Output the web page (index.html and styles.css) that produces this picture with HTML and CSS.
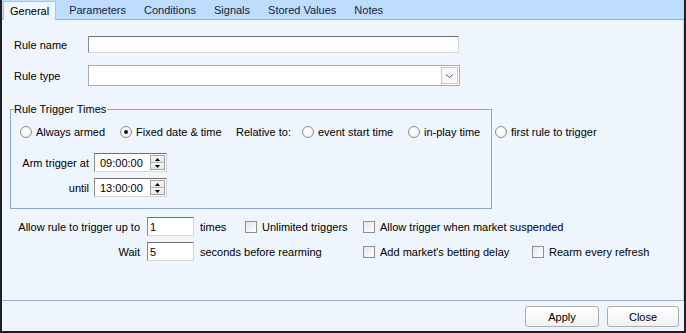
FILE: index.html
```html
<!DOCTYPE html>
<html lang="en">
<head>
    <meta charset="UTF-8">
    <title>Rule Editor</title>
    <link rel="stylesheet" href="styles.css">
</head>
<body>
    <div class="window">
        <div class="tabs">
            <span class="tab active">General</span>
            <span class="tab">Parameters</span>
            <span class="tab">Conditions</span>
            <span class="tab">Signals</span>
            <span class="tab">Stored Values</span>
            <span class="tab">Notes</span>
        </div>

        <div class="panel">
            <div class="row">
                <span class="field-label">Rule name</span>
                <input class="textbox name-box" type="text" value="">
            </div>
            <div class="row row-type">
                <span class="field-label">Rule type</span>
                <div class="combo">
                    <span class="drop">
                        <svg width="9" height="6" viewBox="0 0 9 6"><path d="M1 1.5 L4.5 4.5 L8 1.5" fill="none" stroke="#555" stroke-width="1"/></svg>
                    </span>
                </div>
            </div>

            <div class="group">
                <span class="legend">Rule Trigger Times</span>
                <div class="radio-row">
                    <span class="opt opt-always"><i class="radio"></i>Always armed</span>
                    <span class="opt opt-fixed"><i class="radio checked"></i>Fixed date &amp; time</span>
                    <span class="opt opt-relative">Relative to:</span>
                    <span class="opt opt-event"><i class="radio"></i>event start time</span>
                    <span class="opt opt-inplay"><i class="radio"></i>in-play time</span>
                    <span class="opt"><i class="radio"></i>first rule to trigger</span>
                </div>
                <div class="time-row">
                    <span class="time-label">Arm trigger at</span>
                    <div class="textbox timebox">
                        <span>09:00:00</span>
                        <span class="spin">
                            <i class="spin-up"><svg width="5" height="3" viewBox="0 0 5 3"><path d="M0 3 L2.5 0 L5 3 Z" fill="#000"/></svg></i>
                            <i class="spin-down"><svg width="5" height="3" viewBox="0 0 5 3"><path d="M0 0 L2.5 3 L5 0 Z" fill="#000"/></svg></i>
                        </span>
                    </div>
                </div>
                <div class="time-row until-row">
                    <span class="time-label">until</span>
                    <div class="textbox timebox">
                        <span>13:00:00</span>
                        <span class="spin">
                            <i class="spin-up"><svg width="5" height="3" viewBox="0 0 5 3"><path d="M0 3 L2.5 0 L5 3 Z" fill="#000"/></svg></i>
                            <i class="spin-down"><svg width="5" height="3" viewBox="0 0 5 3"><path d="M0 0 L2.5 3 L5 0 Z" fill="#000"/></svg></i>
                        </span>
                    </div>
                </div>
            </div>

            <div class="count-row first">
                <span class="count-label">Allow rule to trigger up to</span>
                <input class="textbox num-box" type="text" value="1">
                <span class="after short">times</span>
                <span class="check-item short"><i class="check"></i>Unlimited triggers</span>
                <span class="check-item"><i class="check"></i>Allow trigger when market suspended</span>
            </div>
            <div class="count-row">
                <span class="count-label">Wait</span>
                <input class="textbox num-box" type="text" value="5">
                <span class="after long">seconds before rearming</span>
                <span class="check-item long"><i class="check"></i>Add market's betting delay</span>
                <span class="check-item"><i class="check"></i>Rearm every refresh</span>
            </div>
        </div>

        <div class="footer">
            <button class="btn apply">Apply</button>
            <button class="btn close">Close</button>
        </div>
    </div>
</body>
</html>
```

FILE: styles.css
```css
body {
    margin: 0;
    font-family: "Liberation Sans", Arial, sans-serif;
    font-size: 11px;
    color: #000;
}
.window {
    width: 686px;
    height: 333px;
    box-sizing: border-box;
    border-left: 2px solid #1d1e26;
    border-right: 2px solid #1d1e26;
    border-bottom: 2px solid #1d1e26;
    background-color: #eef5fd;
    display: flex;
    flex-direction: column;
}
.tabs {
    height: 20px;
    box-sizing: border-box;
    background-color: #bedcfd;
    border-bottom: 1px solid #8eb0da;
    display: flex;
    align-items: flex-end;
    padding-left: 1px;
}
.tab {
    padding: 0 9px;
    height: 19px;
    line-height: 21px;
    box-sizing: border-box;
    color: #15233d;
}
.tab.active {
    background-color: #eef5fd;
    border: 1px solid #a7c3e6;
    border-bottom: none;
    height: 19px;
    line-height: 19px;
    margin-bottom: -1px;
    padding: 0 6px 0 6px;
    margin-right: 4px;
    color: #000;
}
.panel {
    height: 281px;
    box-sizing: border-box;
    border-bottom: 1px solid #96aed1;
    border-right: 1px solid #c2d2e7;
    padding: 16px 0 0 8px;
}
.row {
    display: flex;
    align-items: center;
    margin-left: 4px;
}
.row-type {
    margin-top: 12px;
}
.field-label {
    width: 74px;
}
.textbox {
    box-sizing: border-box;
    background-color: #fff;
    border-top: 1px solid #6f6f6f;
    border-left: 1px solid #8c8c8c;
    border-right: 1px solid #d6d6d6;
    border-bottom: 1px solid #d6d6d6;
    font-family: inherit;
    font-size: 11px;
    margin: 0;
    outline: none;
}
.name-box {
    width: 371px;
    height: 17px;
}
.combo {
    width: 372px;
    height: 21px;
    box-sizing: border-box;
    border: 1px solid #acacac;
    background-color: #fff;
    display: flex;
    align-items: center;
    justify-content: flex-end;
    padding-right: 1px;
}
.drop {
    width: 17px;
    height: 17px;
    box-sizing: border-box;
    border: 1px solid #c9c9c9;
    background-color: #f7f7f7;
    display: flex;
    align-items: center;
    justify-content: center;
}
.group {
    position: relative;
    margin-top: 23px;
    width: 482px;
    box-sizing: border-box;
    border: 1px solid #86a8d4;
    padding: 14px 0 11px 9px;
}
.legend {
    position: absolute;
    top: -8px;
    left: 3px;
    padding: 0 1px 0 0;
    background-color: #eef5fd;
    line-height: 14px;
}
.radio-row {
    display: flex;
    align-items: center;
    height: 14px;
    margin-top: 1px;
}
.opt {
    display: flex;
    align-items: center;
    flex-shrink: 0;
    white-space: nowrap;
}
.opt-always { width: 100px; }
.opt-fixed { width: 116px; }
.opt-relative { width: 66px; }
.opt-event { width: 106px; }
.opt-inplay { width: 87px; }
.radio {
    width: 12px;
    height: 12px;
    box-sizing: border-box;
    border: 1px solid #8f8f8f;
    border-radius: 50%;
    background: radial-gradient(circle at 40% 40%, #ffffff 0%, #ececec 100%);
    margin-right: 4px;
    display: flex;
    align-items: center;
    justify-content: center;
}
.radio.checked::after {
    content: "";
    width: 4px;
    height: 4px;
    border-radius: 50%;
    background-color: #1a1a1a;
}
.time-row {
    display: flex;
    align-items: center;
    margin-top: 14px;
}
.until-row {
    margin-top: 6px;
}
.time-label {
    width: 74px;
    box-sizing: border-box;
    padding-right: 5px;
    text-align: right;
}
.timebox {
    width: 73px;
    height: 19px;
    display: flex;
    align-items: center;
    justify-content: space-between;
    padding: 0 1px 0 5px;
}
.spin {
    width: 15px;
    height: 15px;
    box-sizing: border-box;
    border: 1px solid #a3a3a3;
    display: flex;
    flex-direction: column;
}
.spin i {
    flex: 1;
    display: flex;
    align-items: center;
    justify-content: center;
    background: linear-gradient(#f8f8f8, #e6e6e6);
}
.spin-up {
    border-bottom: 1px solid #b5b5b5;
}
.count-row {
    display: flex;
    align-items: center;
    margin-top: 6px;
    white-space: nowrap;
}
.count-row.first {
    margin-top: 8px;
}
.count-label {
    width: 137px;
    box-sizing: border-box;
    padding-right: 7px;
    text-align: right;
}
.num-box {
    width: 47px;
    height: 19px;
    padding: 0 2px;
}
.after {
    box-sizing: border-box;
    padding-left: 6px;
}
.after.short { width: 51px; }
.after.long { width: 169px; }
.check-item {
    display: flex;
    align-items: center;
}
.check-item.short { width: 118px; }
.check-item.long { width: 169px; }
.check {
    width: 12px;
    height: 12px;
    box-sizing: border-box;
    border: 1px solid #8f8f8f;
    background: linear-gradient(135deg, #e6e6e6, #ffffff);
    margin-right: 5px;
}
.footer {
    flex: 1;
    display: flex;
    justify-content: flex-end;
    align-items: flex-start;
    gap: 8px;
    padding: 5px 5px 0 0;
}
.btn {
    height: 21px;
    border: 1px solid #adadad;
    border-radius: 3px;
    background: linear-gradient(#ffffff, #f1f1f1);
    font-family: inherit;
    font-size: 11px;
    color: #000;
    padding: 0;
}
.apply { width: 74px; }
.close { width: 72px; }
```
